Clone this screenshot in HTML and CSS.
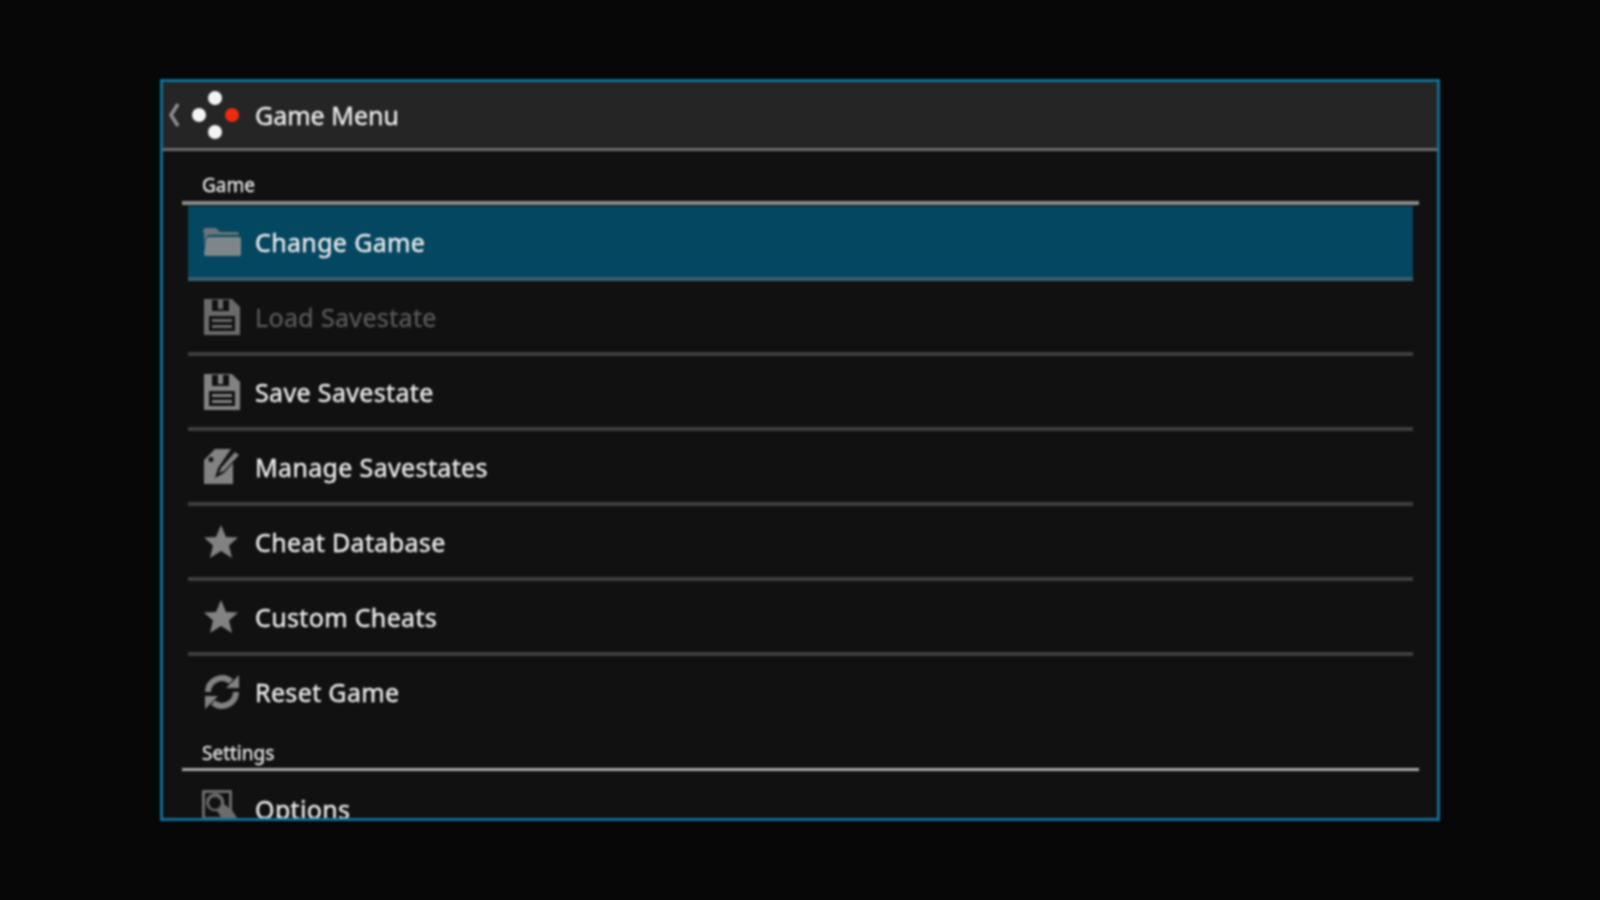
FILE: index.html
```html
<!DOCTYPE html>
<html lang="en">
<head>
<meta charset="utf-8">
<title>Game Menu</title>
<link rel="stylesheet" href="styles.css">
</head>
<body>
<svg class="defs" width="0" height="0" aria-hidden="true">
  <symbol id="i-floppy" viewBox="0 0 38 38">
    <path fill-rule="evenodd" d="M1 1H29L37 9V37H1ZM9 2V13H26V2H20V11H15V2ZM6 18V33H32V18ZM9 21H29V24H9ZM9 27H29V30H9Z"/>
  </symbol>
  <symbol id="i-star" viewBox="0 0 36 36">
    <path d="M18 1L23 13L35 13.500L26 21.500L29 34L18 27L7 34L10 21.500L1 13.500L13 13Z"/>
  </symbol>
</svg>
<main class="panel">
  <header class="titlebar">
    <svg class="back" viewBox="0 0 12 26"><path d="M10 2L3 13L10 24"/></svg>
    <svg class="logo" viewBox="0 0 50 50">
      <circle cx="25" cy="8" r="7" fill="#f4f4f4"/>
      <circle cx="25" cy="42" r="7" fill="#f4f4f4"/>
      <circle cx="9" cy="25" r="7" fill="#f4f4f4"/>
      <circle cx="42" cy="25" r="7" fill="#ee2a10"/>
    </svg>
    <h1 class="title">Game Menu</h1>
  </header>
  <section class="menu">
    <h2 class="group group-first">Game</h2>
    <div class="row row-active">
      <svg class="icon" viewBox="0 0 38 30"><path class="tab" d="M0 5Q0 1 3 1H13L17 5H34Q36 5 36 8H8Q3 8 2 12L1 20V5Z"/><path d="M3 12Q3 10 6 10H36Q38 10 38 12V27Q38 29 36 29H3Q1 29 1 27Z"/></svg>
      <span class="label">Change Game</span>
    </div>
    <div class="row row-disabled">
      <svg class="icon"><use href="#i-floppy"/></svg>
      <span class="label">Load Savestate</span>
    </div>
    <div class="row">
      <svg class="icon"><use href="#i-floppy"/></svg>
      <span class="label">Save Savestate</span>
    </div>
    <div class="row">
      <svg class="icon" viewBox="0 0 38 38"><path d="M1 12L12 1H28L15 20L12 30L21 25L30 15V36H1ZM8 9A2.500 2.500 0 1 0 8 14A2.500 2.500 0 1 0 8 9Z" fill-rule="evenodd"/><path d="M32 4L36 7L21 23L16 25L18 20Z"/></svg>
      <span class="label">Manage Savestates</span>
    </div>
    <div class="row">
      <svg class="icon icon-star"><use href="#i-star"/></svg>
      <span class="label">Cheat Database</span>
    </div>
    <div class="row">
      <svg class="icon icon-star"><use href="#i-star"/></svg>
      <span class="label">Custom Cheats</span>
    </div>
    <div class="row row-last">
      <svg class="icon" viewBox="0 0 38 38"><path class="ring" d="M5 19A14 14 0 0 1 28 8.500M33 19A14 14 0 0 1 10 29.500"/><path d="M36 2V15H23ZM2 36V23H15Z"/></svg>
      <span class="label">Reset Game</span>
    </div>
    <h2 class="group group-second">Settings</h2>
    <div class="row row-options">
      <svg class="icon icon-options" viewBox="0 0 38 38"><path fill-rule="evenodd" d="M0 0H30V20L37 31L31 37L22 30H0ZM3 3V27H19L15 21A9 9 0 1 1 22 14L27 18V3ZM13 7A6 6 0 1 0 13 19A6 6 0 1 0 13 7Z"/></svg>
      <span class="label">Options</span>
    </div>
  </section>
</main>
</body>
</html>
```

FILE: styles.css
```css
* { box-sizing: border-box; }
html, body { height: 100%; }
body {
  margin: 0;
  padding-top: 79px;
  background: #070708;
  overflow: hidden;
  font-family: "Noto Sans", Roboto, sans-serif;
  display: flex;
  justify-content: center;
  align-items: flex-start;
}
.defs { position: absolute; }
.panel {
  width: 1280px;
  height: 742px;
  border: 3px solid #0f6e95;
  background: #111112;
  overflow: hidden;
  filter: blur(0.8px);
}
.titlebar {
  height: 69px;
  background: #252525;
  border-bottom: 3px solid #6d6d6d;
  display: flex;
  align-items: center;
  padding-left: 5px;
}
.back { width: 12px; height: 26px; fill: none; stroke: #8f8f8f; stroke-width: 3.500; }
.logo { width: 50px; height: 50px; margin-left: 10px; }
.title {
  margin: 0 0 0 15px;
  font-size: 25px;
  font-weight: 400;
  color: #ececec;
  -webkit-text-stroke: 0.4px #ececec;
}
.menu { padding: 0 18px 0 19px; }
.group {
  margin: 0;
  padding-left: 20px;
  font-size: 19px;
  line-height: 22px;
  font-weight: 400;
  color: #e8e8e8;
  -webkit-text-stroke: 0.3px #e8e8e8;
}
.group-first { padding-top: 23px; padding-bottom: 5px; border-bottom: 4px solid #8a8a8a; }
.group-second { padding-top: 14px; padding-bottom: 4px; border-bottom: 3px solid #a8a8a8; }
.row {
  height: 75px;
  margin: 0 6px;
  border-bottom: 4px solid #3e3e3e;
  display: flex;
  align-items: center;
  padding-left: 15px;
  color: #ececec;
}
.row-active {
  background: #044761;
  border-bottom-color: #3b5f6e;
  margin-top: 1px;
}
.row-last { border-bottom: 0; height: 72px; }
.row-options { border-bottom: 0; height: 76px; }
.row-disabled { color: #585858; }
.icon {
  width: 38px;
  height: 38px;
  flex: none;
  fill: #828282;
}
.ring { fill: none; stroke: #828282; stroke-width: 6; }
.row-active .icon { height: 30px; fill: #7e8689; }
.row-active .tab { fill: #6b7478; }
.row-disabled .icon { fill: #6a6a6a; }
.icon-star { width: 36px; height: 36px; margin-right: 2px; }
.icon-options { transform: translateX(-1px); opacity: 0.8; }
.label {
  margin-left: 14px;
  font-size: 25px;
  letter-spacing: 0.35px;
  -webkit-text-stroke: 0.4px currentColor;
}
```
